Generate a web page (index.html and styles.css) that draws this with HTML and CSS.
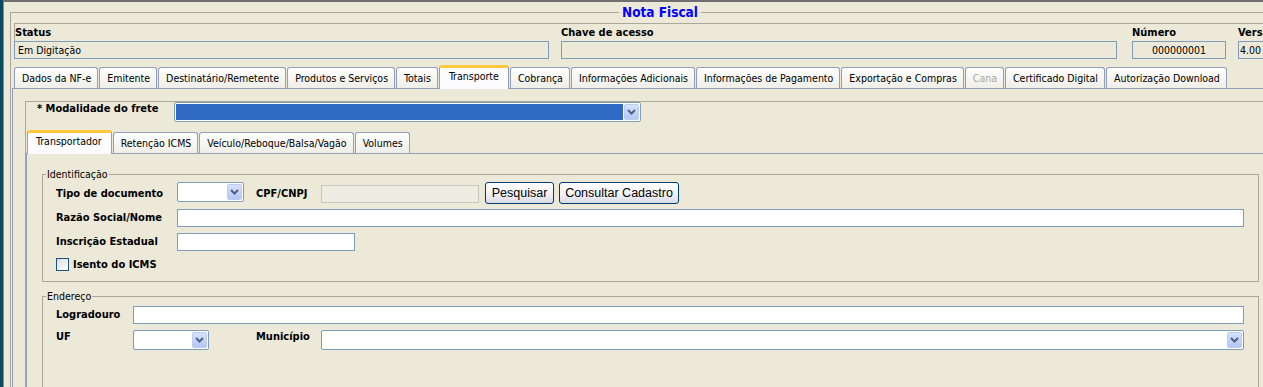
FILE: index.html
```html
<!DOCTYPE html>
<html lang="pt-BR">

<head>
    <meta charset="UTF-8">
    <meta name="viewport" content="width=device-width, initial-scale=1.0">
    <title>Nota Fiscal</title>
    <link rel="stylesheet" href="styles.css">
</head>

<body>
    <div class="desk">
        <div class="win">
            <fieldset class="frame">
                <legend class="title">Nota Fiscal</legend>

                <!-- cabeçalho da nota -->
                <div class="head">
                    <div class="hcol c-status">
                        <div class="hlbl">Status</div>
                        <div class="tf ro">Em Digitação</div>
                    </div>
                    <div class="hcol c-chave">
                        <div class="hlbl">Chave de acesso</div>
                        <div class="tf ro"></div>
                    </div>
                    <div class="hcol c-num">
                        <div class="hlbl">Número</div>
                        <div class="tf ro center">000000001</div>
                    </div>
                    <div class="hcol c-ver">
                        <div class="hlbl">Versão</div>
                        <div class="tf ro">4.00</div>
                    </div>
                </div>

                <!-- abas principais -->
                <div class="tabs main">
                    <div class="tab">Dados da NF-e</div>
                    <div class="tab">Emitente</div>
                    <div class="tab">Destinatário/Remetente</div>
                    <div class="tab">Produtos e Serviços</div>
                    <div class="tab">Totais</div>
                    <div class="tab on">Transporte</div>
                    <div class="tab">Cobrança</div>
                    <div class="tab">Informações Adicionais</div>
                    <div class="tab">Informações de Pagamento</div>
                    <div class="tab">Exportação e Compras</div>
                    <div class="tab off">Cana</div>
                    <div class="tab">Certificado Digital</div>
                    <div class="tab">Autorização Download</div>
                </div>

                <div class="tabpane">
                    <div class="frete">
                        <div class="frete-row">
                            <label class="lbl w-frete">* Modalidade do frete</label>
                            <div class="combo sel w-frete-cb">
                                <span class="val"></span>
                                <span class="arrow"><svg width="9" height="6" viewBox="0 0 9 6"><path d="M1 1 L4.5 4.5 L8 1" fill="none" stroke="#4D6185" stroke-width="2"/></svg></span>
                            </div>
                        </div>

                        <!-- abas do transporte -->
                        <div class="tabs sub">
                            <div class="tab on">Transportador</div>
                            <div class="tab">Retenção ICMS</div>
                            <div class="tab">Veículo/Reboque/Balsa/Vagão</div>
                            <div class="tab">Volumes</div>
                        </div>

                        <div class="subpane">
                            <fieldset class="grp g-ident">
                                <legend>Identificação</legend>
                                <div class="row r1">
                                    <label class="lbl w-tipo">Tipo de documento</label>
                                    <div class="combo w-tipo-cb">
                                        <span class="val"></span>
                                        <span class="arrow"><svg width="9" height="6" viewBox="0 0 9 6"><path d="M1 1 L4.5 4.5 L8 1" fill="none" stroke="#4D6185" stroke-width="2"/></svg></span>
                                    </div>
                                    <label class="lbl w-cpf">CPF/CNPJ</label>
                                    <div class="tf dis w-cpf-tf"></div>
                                    <button class="btn w-pesq">Pesquisar</button>
                                    <button class="btn w-cons">Consultar Cadastro</button>
                                </div>
                                <div class="row r2">
                                    <label class="lbl w-tipo">Razão Social/Nome</label>
                                    <div class="tf w-razao"></div>
                                </div>
                                <div class="row r3">
                                    <label class="lbl w-tipo">Inscrição Estadual</label>
                                    <div class="tf w-ie"></div>
                                </div>
                                <div class="row r4">
                                    <span class="chk"></span>
                                    <label class="lbl">Isento do ICMS</label>
                                </div>
                            </fieldset>

                            <fieldset class="grp g-end">
                                <legend>Endereço</legend>
                                <div class="row r5">
                                    <label class="lbl w-logr">Logradouro</label>
                                    <div class="tf w-logr-tf"></div>
                                </div>
                                <div class="row r6">
                                    <label class="lbl w-logr">UF</label>
                                    <div class="combo w-uf">
                                        <span class="val"></span>
                                        <span class="arrow"><svg width="9" height="6" viewBox="0 0 9 6"><path d="M1 1 L4.5 4.5 L8 1" fill="none" stroke="#4D6185" stroke-width="2"/></svg></span>
                                    </div>
                                    <label class="lbl w-mun">Município</label>
                                    <div class="combo w-mun-cb">
                                        <span class="val"></span>
                                        <span class="arrow"><svg width="9" height="6" viewBox="0 0 9 6"><path d="M1 1 L4.5 4.5 L8 1" fill="none" stroke="#4D6185" stroke-width="2"/></svg></span>
                                    </div>
                                </div>
                            </fieldset>
                        </div>
                    </div>
                </div>
            </fieldset>
        </div>
    </div>
</body>

</html>
```

FILE: styles.css
```css
* {
    box-sizing: border-box;
    margin: 0;
    padding: 0;
}

html,
body {
    width: 1263px;
    height: 387px;
    overflow: hidden;
}

body {
    background-color: #ECE9D8;
    font-family: "DejaVu Sans", sans-serif;
    font-stretch: condensed;
    font-size: 10.5px;
    color: #000;
}

.desk {
    height: 387px;
    border-left: 3px solid #0C4A61;
}

.win {
    height: 100%;
    border-left: 1px solid #8C8C8C;
    border-top: 2px solid #6E6E6E;
    padding-left: 6px;
}

/* moldura "Nota Fiscal" */
.frame {
    width: 1296px;
    margin-top: 2px;
    border: 1px solid #ACA899;
    border-bottom: 0;
    padding: 2px 0 0 1px;
}

.title {
    margin: 0 auto;
    padding: 0 3px;
    font-size: 13.5px;
    font-weight: bold;
    line-height: 17px;
    color: #0000FF;
}

/* cabeçalho */
.head {
    display: flex;
    margin-left: 2px;
    border-top: 1px solid #ACA899;
}

.hlbl {
    height: 17px;
    padding-top: 2px;
    font-size: 11px;
    font-weight: bold;
    line-height: 13px;
    white-space: nowrap;
}

.c-status {
    width: 535px;
    margin-right: 12px;
}

.c-status .hlbl {
    border-left: 1px solid #ACA899;
}

.c-chave {
    width: 556px;
    margin-right: 15px;
}

.c-num {
    width: 94px;
    margin-right: 12px;
}

.c-ver {
    width: 70px;
}

.tf {
    height: 18px;
    border: 1px solid #7F9DB9;
    background-color: #fff;
    padding: 0 3px;
    line-height: 16px;
    white-space: nowrap;
}

.tf.ro {
    background-color: transparent;
}

.c-ver .tf {
    padding-left: 1px;
}

.center {
    text-align: center;
}

.tf.dis {
    background-color: #EEEDE4;
    border-color: #C9C7BA;
}

/* abas */
.tabs {
    display: flex;
    align-items: flex-end;
    gap: 1px;
    height: 24px;
    margin-bottom: -1px;
}

.main {
    margin-top: 6px;
    padding-left: 2px;
}

.sub {
    margin-top: 8px;
    padding-left: 1px;
}

.tab {
    height: 21px;
    margin-bottom: 1px;
    padding: 0 6px 0 7px;
    border: 1px solid #919FB8;
    border-bottom: 0;
    border-radius: 3px 3px 0 0;
    background: linear-gradient(#FEFEFE, #EFEEE8);
    line-height: 20px;
    white-space: nowrap;
}

.tab.on {
    position: relative;
    z-index: 1;
    height: 24px;
    margin-bottom: 0;
    padding: 0 9px 0 9px;
    border-top: 3px solid #FFC83C;
    background: #FCFCFE;
    line-height: 17px;
}

.sub .tab.on {
    padding: 0 9px 0 8px;
}

.tab.off {
    color: #ACA899;
}

.tabpane {
    border-top: 1px solid #919FB8;
    border-left: 1px solid #919FB8;
    padding: 12px 0 0 12px;
}

/* modalidade do frete */
.frete {
    border-top: 1px solid #ACA899;
    border-left: 1px solid #ACA899;
}

.frete-row {
    display: flex;
    height: 20px;
    padding-left: 11px;
}

.lbl {
    font-size: 11px;
    font-weight: bold;
    white-space: nowrap;
}

.w-frete {
    width: 137px;
    line-height: 14px;
}

.w-frete-cb {
    width: 467px;
}

.combo {
    display: flex;
    height: 20px;
    padding: 1px;
    border: 1px solid #7F9DB9;
    border-radius: 2px;
    background-color: #fff;
}

.combo .val {
    flex: 1;
}

.combo.sel .val {
    margin-right: 1px;
    background-color: #316AC5;
}

.arrow {
    display: flex;
    align-items: center;
    justify-content: center;
    width: 15px;
    height: 16px;
    border: 1px solid #BCCBEF;
    border-radius: 2px;
    background: linear-gradient(#D5E1FD, #B4C7F4);
}

.subpane {
    border-top: 1px solid #919FB8;
    border-left: 1px solid #919FB8;
    padding: 14px 0 0 15px;
}

/* grupos */
.grp {
    width: 1217px;
    border: 1px solid #ACA899;
    padding: 1px 0 10px 13px;
}

.grp legend {
    margin-left: -10px;
    padding: 0 1px;
    line-height: 13px;
}

.g-end {
    margin-top: 8px;
    padding-top: 3px;
    padding-bottom: 60px;
}

.row {
    display: flex;
    align-items: flex-start;
}

.r1 {
    height: 22px;
}

.r1 .lbl {
    padding-top: 3px;
    line-height: 18px;
}

.r2 {
    margin-top: 5px;
    height: 18px;
}

.r3 {
    margin-top: 6px;
    height: 18px;
}

.r2 .lbl,
.r3 .lbl,
.r5 .lbl {
    line-height: 18px;
}

.r4 {
    margin-top: 7px;
    height: 13px;
}

.r4 .lbl {
    line-height: 13px;
}

.r5 {
    height: 18px;
}

.r6 {
    margin-top: 6px;
    height: 20px;
}

.r6 .lbl {
    line-height: 14px;
}

.w-tipo {
    width: 121px;
}

.w-tipo-cb {
    width: 67px;
}

.w-cpf {
    width: 65px;
    margin-left: 12px;
}

.w-cpf-tf {
    width: 158px;
    margin-top: 3px;
}

.btn {
    height: 22px;
    border: 1px solid #003C74;
    border-radius: 3px;
    background: linear-gradient(#FFFFFF, #F2F2F5 55%, #D9D9E4);
    font-family: "Liberation Sans", Arial, sans-serif;
    font-size: 12.5px;
    line-height: 20px;
    color: #000;
    text-align: center;
}

.w-pesq {
    width: 69px;
    margin-left: 6px;
}

.w-cons {
    width: 120px;
    margin-left: 5px;
}

.w-razao {
    width: 1067px;
}

.w-ie {
    width: 178px;
}

.chk {
    width: 13px;
    height: 13px;
    margin-right: 4px;
    border: 1px solid #1C5180;
    background: linear-gradient(135deg, #DCDCD7, #FFFFFF);
}

.w-logr {
    width: 77px;
}

.w-logr-tf {
    width: 1111px;
}

.w-uf {
    width: 76px;
}

.w-mun {
    width: 65px;
    margin-left: 47px;
}

.w-mun-cb {
    width: 923px;
}
```
